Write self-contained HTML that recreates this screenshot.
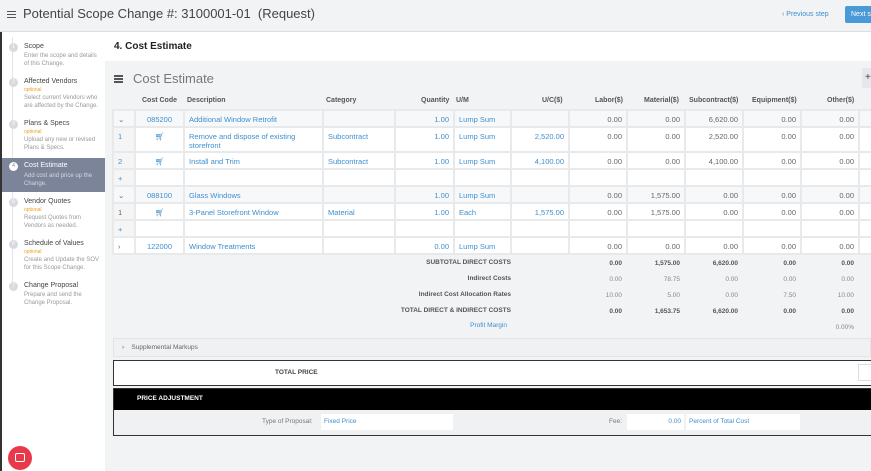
<!DOCTYPE html>
<html><head><meta charset="utf-8"><style>
*{box-sizing:border-box;margin:0;padding:0}
body{width:871px;height:471px;overflow:hidden;background:#f2f3f5;font-family:"Liberation Sans",sans-serif;position:relative;color:#444}
.a{position:absolute}
.top{left:0;top:0;width:871px;height:32px;background:#f2f3f5;border-bottom:1px solid #dcdde0}
.side{left:0;top:32px;width:105px;height:439px;background:#fff;border-left:2px solid #333}
.step{position:absolute;left:0;width:103px;font-size:6.5px}
.step .n{position:absolute;left:7px;top:1px;width:9px;height:9px;border-radius:50%;background:#d8dadf;color:#fff;font-size:5px;text-align:center;line-height:9px}
.step .t{position:absolute;left:22px;top:1px;color:#444;font-size:7px}
.step .o{position:absolute;left:22px;top:10px;color:#f0a020;font-size:5px}
.step .d{position:absolute;left:22px;color:#999;line-height:8px;font-size:6px}
table{border-collapse:collapse;table-layout:fixed}
td{border:2px solid #e8e9eb;font-size:7.5px;color:#3d8fd1;padding:0 4px;vertical-align:top;padding-top:3.5px;overflow:hidden;white-space:nowrap}
td.r{text-align:right}
td.g{color:#666}
tr.grp td{background:#f7f8f9}
tr.det td{background:#fff}
tr.det td:first-child{background:#f5f5f6}
.hd{font-size:7px;color:#555;font-weight:bold;top:97px}
.sum{font-size:6.5px;font-weight:bold;color:#555;text-align:right}
</style></head><body>
<div class="a top">
 <div class="a" style="left:7px;top:11px;width:9px;height:1px;background:#555;box-shadow:0 3px #555,0 6px #555"></div>
 <div class="a" style="left:23px;top:6px;font-size:13px;color:#444">Potential Scope Change #: 3100001-01&nbsp; (Request)</div>
 <div class="a" style="left:782px;top:11px;font-size:7px;color:#3d8fd1">‹ Previous step</div>
 <div class="a" style="left:845px;top:6px;width:30px;height:17px;background:#4a9ad8;border-radius:2px;color:#fff;font-size:7px;padding:5px 0 0 6px">Next s</div>
</div>
<div class="a side">
 <div class="a" style="left:10px;top:5px;width:1px;height:250px;background:#e3e4e6"></div>
 <div class="step" style="top:10px"><div class="n">1</div><div class="t">Scope</div><div class="d" style="top:10px">Enter the scope and details<br>of this Change.</div></div>
 <div class="step" style="top:45px"><div class="n">2</div><div class="t">Affected Vendors</div><div class="o">optional</div><div class="d" style="top:17px">Select current Vendors who<br>are affected by the Change.</div></div>
 <div class="step" style="top:87px"><div class="n">3</div><div class="t">Plans &amp; Specs</div><div class="o">optional</div><div class="d" style="top:17px">Upload any new or revised<br>Plans &amp; Specs.</div></div>
 <div class="step" style="top:126px;height:34px;background:#7b8499"><div class="n" style="top:4px;background:#fff;color:#7b8499">4</div><div class="t" style="top:4px;color:#fff">Cost Estimate</div><div class="d" style="top:14px;color:#d5d8e0">Add cost and price up the<br>Change.</div></div>
 <div class="step" style="top:165px"><div class="n">5</div><div class="t">Vendor Quotes</div><div class="o">optional</div><div class="d" style="top:17px">Request Quotes from<br>Vendors as needed.</div></div>
 <div class="step" style="top:207px"><div class="n">6</div><div class="t">Schedule of Values</div><div class="o">optional</div><div class="d" style="top:17px">Create and Update the SOV<br>for this Scope Change.</div></div>
 <div class="step" style="top:249px"><div class="n">7</div><div class="t">Change Proposal</div><div class="d" style="top:10px">Prepare and send the<br>Change Proposal.</div></div>
 <div class="a" style="left:6px;top:414px;width:24px;height:24px;border-radius:50%;background:#e8394a"><div class="a" style="left:7px;top:7px;width:10px;height:9px;border:1.5px solid #fff;border-radius:2px"></div></div>
</div>
<div class="a" style="left:105px;top:32px;width:766px;height:29px;background:#fff"></div>
<div class="a" style="left:114px;top:41px;font-size:10px;font-weight:bold;color:#222">4. Cost Estimate</div>
<div class="a" style="left:114px;top:75px;width:9px;height:1.5px;background:#555;box-shadow:0 3px #555,0 6px #555"></div>
<div class="a" style="left:133px;top:71px;font-size:13px;color:#777">Cost Estimate</div>
<div class="a" style="left:862px;top:68px;width:12px;height:20px;background:#e6e7ea;font-size:10px;padding:4px 0 0 3px">+</div>
<div class="a hd" style="left:142px">Cost Code</div>
<div class="a hd" style="left:187px">Description</div>
<div class="a hd" style="left:326px">Category</div>
<div class="a hd" style="left:421px">Quantity</div>
<div class="a hd" style="left:456px">U/M</div>
<div class="a hd" style="left:542px">U/C($)</div>
<div class="a hd" style="left:595px">Labor($)</div>
<div class="a hd" style="left:644px">Material($)</div>
<div class="a hd" style="left:689px">Subcontract($)</div>
<div class="a hd" style="left:752px">Equipment($)</div>
<div class="a hd" style="left:827px">Other($)</div>
<div class="a" style="left:113px;top:109px;width:758px;height:1px;background:#777"></div>
<table class="a" style="left:112px;top:109px;width:790px">
<colgroup><col style="width:22px"><col style="width:49px"><col style="width:139px"><col style="width:72px"><col style="width:59px"><col style="width:57px"><col style="width:58px"><col style="width:58px"><col style="width:58px"><col style="width:58px"><col style="width:58px"><col style="width:58px"><col style="width:44px"></colgroup>
<tr class="grp" style="height:17px"><td class="g">⌄</td><td style="text-align:center">085200</td><td>Additional Window Retrofit</td><td></td><td class="r">1.00</td><td>Lump Sum</td><td></td><td class="r g">0.00</td><td class="r g">0.00</td><td class="r g">6,620.00</td><td class="r g">0.00</td><td class="r g">0.00</td><td></td></tr>
<tr class="det" style="height:25px"><td>1</td><td style="text-align:center">🛒︎</td><td style="white-space:normal">Remove and dispose of existing storefront</td><td>Subcontract</td><td class="r">1.00</td><td>Lump Sum</td><td class="r">2,520.00</td><td class="r g">0.00</td><td class="r g">0.00</td><td class="r g">2,520.00</td><td class="r g">0.00</td><td class="r g">0.00</td><td></td></tr>
<tr class="det" style="height:17px"><td>2</td><td style="text-align:center">🛒︎</td><td>Install and Trim</td><td>Subcontract</td><td class="r">1.00</td><td>Lump Sum</td><td class="r">4,100.00</td><td class="r g">0.00</td><td class="r g">0.00</td><td class="r g">4,100.00</td><td class="r g">0.00</td><td class="r g">0.00</td><td></td></tr>
<tr class="det" style="height:17px"><td>+</td><td></td><td></td><td></td><td></td><td></td><td></td><td></td><td></td><td></td><td></td><td></td><td></td></tr>
<tr class="grp" style="height:17px"><td class="g">⌄</td><td style="text-align:center">088100</td><td>Glass Windows</td><td></td><td class="r">1.00</td><td>Lump Sum</td><td></td><td class="r g">0.00</td><td class="r g">1,575.00</td><td class="r g">0.00</td><td class="r g">0.00</td><td class="r g">0.00</td><td></td></tr>
<tr class="det" style="height:17px"><td class="g">1</td><td style="text-align:center">🛒︎</td><td>3-Panel Storefront Window</td><td>Material</td><td class="r">1.00</td><td>Each</td><td class="r">1,575.00</td><td class="r g">0.00</td><td class="r g">1,575.00</td><td class="r g">0.00</td><td class="r g">0.00</td><td class="r g">0.00</td><td></td></tr>
<tr class="det" style="height:17px"><td>+</td><td></td><td></td><td></td><td></td><td></td><td></td><td></td><td></td><td></td><td></td><td></td><td></td></tr>
<tr class="det" style="height:17px"><td class="g" style="background:#fff">›</td><td style="text-align:center">122000</td><td>Window Treatments</td><td></td><td class="r">0.00</td><td>Lump Sum</td><td></td><td class="r g">0.00</td><td class="r g">0.00</td><td class="r g">0.00</td><td class="r g">0.00</td><td class="r g">0.00</td><td></td></tr>
</table>
<div class="a sum" style="left:300px;width:211px;top:259px">SUBTOTAL DIRECT COSTS</div>
<div class="a sum" style="left:300px;width:211px;top:275px">Indirect Costs</div>
<div class="a sum" style="left:300px;width:211px;top:291px">Indirect Cost Allocation Rates</div>
<div class="a sum" style="left:300px;width:211px;top:307px">TOTAL DIRECT &amp; INDIRECT COSTS</div>
<div class="a sum" style="left:300px;width:207px;top:322px;color:#3d8fd1;font-weight:normal">Profit Margin</div>
<div class="a" style="font-size:6.5px;color:#555;line-height:16px;top:256px;left:560px;width:300px">
<div style="display:flex;font-weight:bold"><span style="width:62px;text-align:right">0.00</span><span style="width:58px;text-align:right">1,575.00</span><span style="width:58px;text-align:right">6,620.00</span><span style="width:58px;text-align:right">0.00</span><span style="width:58px;text-align:right">0.00</span></div>
<div style="display:flex;color:#888"><span style="width:62px;text-align:right">0.00</span><span style="width:58px;text-align:right">78.75</span><span style="width:58px;text-align:right">0.00</span><span style="width:58px;text-align:right">0.00</span><span style="width:58px;text-align:right">0.00</span></div>
<div style="display:flex;color:#888"><span style="width:62px;text-align:right">10.00</span><span style="width:58px;text-align:right">5.00</span><span style="width:58px;text-align:right">0.00</span><span style="width:58px;text-align:right">7.50</span><span style="width:58px;text-align:right">10.00</span></div>
<div style="display:flex;font-weight:bold"><span style="width:62px;text-align:right">0.00</span><span style="width:58px;text-align:right">1,653.75</span><span style="width:58px;text-align:right">6,620.00</span><span style="width:58px;text-align:right">0.00</span><span style="width:58px;text-align:right">0.00</span></div>
<div style="display:flex;color:#888"><span style="width:294px;text-align:right">0.00%</span></div>
</div>
<div class="a" style="left:113px;top:338px;width:758px;height:19px;border:1px solid #e3e4e6;background:#f0f1f3;font-size:6.5px;color:#666;padding:5px 0 0 8px">›&nbsp;&nbsp;&nbsp; Supplemental Markups</div>
<div class="a" style="left:113px;top:360px;width:760px;height:26px;border:1.5px solid #333;background:#fff"><div class="a" style="left:161px;top:8px;font-size:6.5px;font-weight:bold;color:#444">TOTAL PRICE</div><div class="a" style="left:744px;top:3px;width:20px;height:17px;border:1px solid #ddd"></div></div>
<div class="a" style="left:113px;top:388px;width:760px;height:48px;border:1.5px solid #333;background:#f0f1f3">
 <div class="a" style="left:0;top:0;width:760px;height:21px;background:#000;color:#fff;font-size:6.5px;font-weight:bold;padding:6px 0 0 23px">PRICE ADJUSTMENT</div>
 <div class="a" style="left:148px;top:29px;font-size:6.5px;color:#777">Type of Proposal:</div>
 <div class="a" style="left:207px;top:25px;width:132px;height:16px;background:#fff;font-size:6.5px;color:#3d8fd1;padding:4px 3px">Fixed Price</div>
 <div class="a" style="left:495px;top:29px;font-size:6.5px;color:#777">Fee:</div>
 <div class="a" style="left:513px;top:25px;width:57px;height:16px;background:#fff;font-size:6.5px;color:#3d8fd1;padding:4px 3px;text-align:right">0.00</div>
 <div class="a" style="left:572px;top:25px;width:114px;height:16px;background:#fff;font-size:6.5px;color:#3d8fd1;padding:4px 3px">Percent of Total Cost</div>
</div>
</body></html>
